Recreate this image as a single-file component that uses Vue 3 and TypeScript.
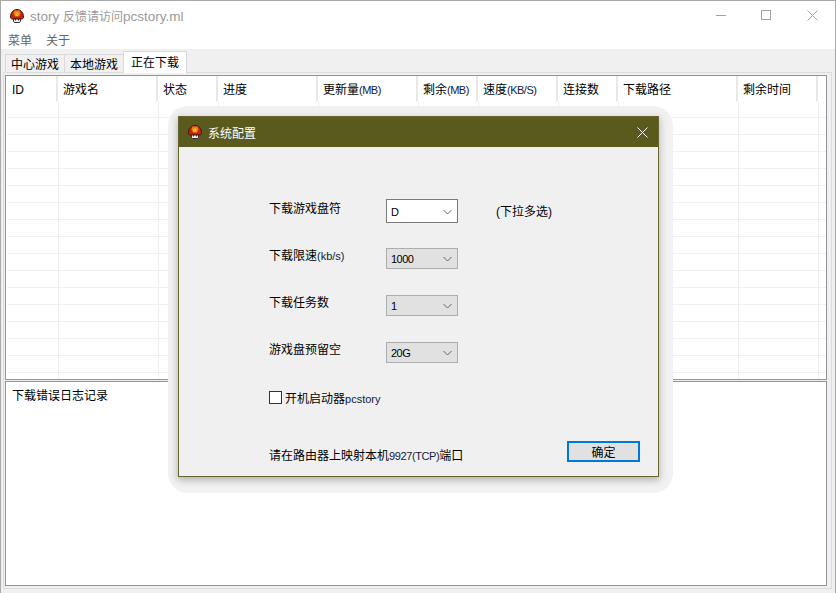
<script setup lang="ts">
const columns = [
  { label: 'ID', unit: '', width: 52 },
  { label: '游戏名', unit: '', width: 100 },
  { label: '状态', unit: '', width: 60 },
  { label: '进度', unit: '', width: 100 },
  { label: '更新量', unit: '(MB)', width: 100 },
  { label: '剩余', unit: '(MB)', width: 60 },
  { label: '速度', unit: '(KB/S)', width: 80 },
  { label: '连接数', unit: '', width: 60 },
  { label: '下载路径', unit: '', width: 120 },
  { label: '剩余时间', unit: '', width: 80 },
]
const rows = Array.from({ length: 17 }, (_, i) => i)
const tabs = ['中心游戏', '本地游戏']
</script>

<template>
  <div class="window">
    <svg class="defs" width="0" height="0">
      <symbol id="mushroom" viewBox="0 0 14 14">
        <path d="M.5 8C.5 3.500 3.300.5 7 .5s6.500 3 6.500 7.500c0 1.200-.7 2-2 2h-9c-1.300 0-2-.8-2-2z" fill="#c9230f" stroke="#3a1810" />
        <path d="M4.500 1.500h5l1 3-1.500 3h-4l-1.500-3z" fill="#ea7f16" />
        <path d="M5.800 3.500h2.400l.8 2-1 1.500H6L5 5.500z" fill="#f7b62a" />
        <path d="M3.500 10h7v2c0 1-.8 1.500-1.500 1.500H5c-.8 0-1.500-.5-1.500-1.500z" fill="#f6f3ea" stroke="#3a2a22" />
        <path d="M5.500 10v1.500M8.500 10v1.500" stroke="#3a2a22" />
      </symbol>
    </svg>
    <header class="titlebar">
      <svg class="logo" width="14" height="14"><use href="#mushroom" /></svg>
      <span class="title-text">story <span class="cjk">反馈请访问</span>pcstory.ml</span>
      <div class="controls">
        <svg width="10" height="11" viewBox="0 0 10 11"><path d="M0 5.500h10" stroke="#a3a3a3" /></svg>
        <svg width="11" height="11" viewBox="0 0 11 11"><rect x=".5" y=".5" width="9" height="9" fill="none" stroke="#a3a3a3" /></svg>
        <svg width="11" height="11" viewBox="0 0 11 11"><path d="M.5.500l10 10M10.500.500l-10 10" stroke="#a3a3a3" /></svg>
      </div>
    </header>
    <nav class="menubar">
      <span>菜单</span>
      <span>关于</span>
    </nav>
    <main class="content">
      <div class="tabs">
        <span v-for="tab in tabs" :key="tab" class="tab">{{ tab }}</span>
        <span class="tab active">正在下载</span>
      </div>
      <div class="tabpage">
        <section class="table-panel">
          <div class="thead">
            <div v-for="col in columns" :key="col.label" class="th" :style="{ width: col.width + 'px' }">{{ col.label }}<span class="unit">{{ col.unit }}</span></div>
          </div>
          <div v-for="row in rows" :key="row" class="tr">
            <div v-for="col in columns" :key="col.label" class="td" :style="{ width: col.width + 'px' }"></div>
          </div>
        </section>
        <section class="log-panel">下载错误日志记录</section>
      </div>
    </main>

    <div class="halo">
      <div class="dialog">
        <div class="dialog-title">
          <svg class="logo" width="14" height="14"><use href="#mushroom" /></svg>
          <span class="dialog-title-text">系统配置</span>
          <svg class="dialog-close" width="11" height="11" viewBox="0 0 11 11"><path d="M.5.500l10 10M10.500.500l-10 10" stroke="#fff" /></svg>
        </div>
        <div class="dialog-body">
          <div class="form">
            <div class="field">
              <label>下载游戏盘符</label>
              <div class="select white"><span>D</span><svg width="9" height="6" viewBox="0 0 9 6"><path d="M.5 1l4 4 4-4" fill="none" stroke="#666" /></svg></div>
              <span class="hint">(下拉多选)</span>
            </div>
            <div class="field">
              <label>下载限速<span class="latin">(kb/s)</span></label>
              <div class="select"><span>1000</span><svg width="9" height="6" viewBox="0 0 9 6"><path d="M.5 1l4 4 4-4" fill="none" stroke="#666" /></svg></div>
            </div>
            <div class="field">
              <label>下载任务数</label>
              <div class="select"><span>1</span><svg width="9" height="6" viewBox="0 0 9 6"><path d="M.5 1l4 4 4-4" fill="none" stroke="#666" /></svg></div>
            </div>
            <div class="field">
              <label>游戏盘预留空</label>
              <div class="select"><span>20G</span><svg width="9" height="6" viewBox="0 0 9 6"><path d="M.5 1l4 4 4-4" fill="none" stroke="#666" /></svg></div>
            </div>
            <div class="check-row">
              <span class="checkbox"></span>
              <span>开机启动器<span class="latin">pcstory</span></span>
            </div>
          </div>
          <div class="dialog-foot">
            <span class="foot-text">请在路由器上映射本机<span class="latin narrow">9927(TCP)</span>端口</span>
            <button class="ok" type="button">确定</button>
          </div>
        </div>
      </div>
    </div>
  </div>
</template>

<style>
html, body { margin: 0; padding: 0; background: #f0f0f0; overflow: hidden; }
</style>

<style scoped>
.window {
  position: relative;
  box-sizing: border-box;
  width: 836px;
  height: 593px;
  background: #f0f0f0;
  border-top: 1px solid #a9a9a9;
  border-left: 1px solid #a9a9a9;
  border-right: 1px solid #a9a9a9;
  font-family: "Liberation Sans", "Noto Sans CJK SC", sans-serif;
  font-size: 12px;
  color: #000;
  overflow: hidden;
}
.defs { position: absolute; }
.titlebar {
  display: flex;
  align-items: center;
  height: 29px;
  background: #fff;
  padding-left: 9px;
}
.logo { flex: none; }
.title-text {
  margin-left: 6px;
  font-size: 13.5px;
  color: #9a9a9a;
}
.cjk { font-size: 12px; }
.controls {
  margin-left: auto;
  display: flex;
  gap: 35px;
  padding-right: 17px;
}
.menubar {
  display: flex;
  gap: 14px;
  height: 19px;
  align-items: flex-start;
  line-height: 22px;
  padding-left: 7px;
  background: #fff;
  color: #666;
}
.content { padding-left: 2px; }
.tabs {
  position: relative;
  display: flex;
  height: 23px;
  align-items: flex-end;
  padding-left: 2px;
}
.tab {
  box-sizing: border-box;
  height: 18px;
  width: 60px;
  line-height: 20px;
  text-align: center;
  background: #f0f0f0;
  border: 1px solid #d9d9d9;
  border-bottom: 0;
  margin-right: -1px;
}
.tab.active {
  position: relative;
  z-index: 1;
  height: 22px;
  width: 64px;
  background: #fff;
  line-height: 22px;
  margin-bottom: -1px;
}
.tabpage {
  box-sizing: border-box;
  width: 829px;
  height: 517px;
  padding: 2px 0 0 1px;
  border: 1px solid #dcdcdc;
}
.table-panel {
  box-sizing: border-box;
  width: 822px;
  height: 305px;
  background: #fff;
  border: 1px solid #8f949c;
  overflow: hidden;
}
.thead { display: flex; height: 25px; }
.th {
  box-sizing: border-box;
  flex: none;
  height: 25px;
  padding: 5px 0 0 5px;
  line-height: 18px;
  white-space: nowrap;
  border-right: 2px solid #e8e8e8;
}
.th:first-child { padding-left: 6px; }
.unit { font-size: 11px; letter-spacing: -0.5px; color: #102040; }
.tr { display: flex; height: 17px; margin-left: 1px; }
.tr::after {
  content: "";
  flex: 1;
  height: 17px;
  box-sizing: border-box;
  border-bottom: 1px solid #f0f0f0;
}
.td {
  box-sizing: border-box;
  flex: none;
  height: 17px;
  border-right: 1px solid #f0f0f0;
  border-bottom: 1px solid #f0f0f0;
}
.log-panel {
  box-sizing: border-box;
  width: 822px;
  height: 205px;
  margin-top: 1px;
  padding: 5px 0 0 6px;
  line-height: 18px;
  background: #fff;
  border: 1px solid #8f949c;
}
.halo {
  position: absolute;
  left: 167px;
  top: 105px;
  box-sizing: border-box;
  width: 505px;
  height: 387px;
  padding: 10px;
  border-radius: 20px;
  background: #f2f2f2;
}
.dialog {
  box-sizing: border-box;
  width: 481px;
  height: 361px;
  border: 1px solid #66662e;
  background: #f0f0f0;
  box-shadow: 0 3px 7px rgba(0, 0, 0, 0.25), 0 0 7px 4px #ebebeb;
  display: flex;
  flex-direction: column;
}
.dialog-title {
  display: flex;
  align-items: center;
  height: 30px;
  flex: none;
  padding-left: 9px;
  background: #5a5a1e;
  color: #fff;
}
.dialog-title-text { margin-left: 6px; }
.dialog-close { margin-left: auto; margin-right: 10px; }
.dialog-body {
  flex: 1;
  display: flex;
  flex-direction: column;
  padding: 52px 18px 0 90px;
}
.form { flex: 1; display: flex; flex-direction: column; }
.field {
  display: flex;
  align-items: flex-start;
  height: 47px;
}
.field label {
  width: 117px;
  line-height: 18px;
  margin-top: 1px;
}
.latin { font-size: 11px; color: #102040; }
.narrow { letter-spacing: -0.4px; }
.select {
  box-sizing: border-box;
  width: 72px;
  height: 21px;
  margin-top: 2px;
  display: flex;
  align-items: center;
  justify-content: space-between;
  padding: 1px 5px 0 4px;
  background: #e1e1e1;
  border: 1px solid #adadad;
  font-size: 11px;
  letter-spacing: -0.5px;
}
.select.white {
  height: 24px;
  margin-top: 0;
  background: #fff;
  border-color: #7a7a7a;
}
.hint { margin-left: 38px; margin-top: 4px; line-height: 18px; }
.check-row {
  display: flex;
  align-items: center;
  gap: 3px;
  margin-top: 1px;
  height: 18px;
}
.checkbox {
  box-sizing: border-box;
  width: 13px;
  height: 13px;
  background: #fff;
  border: 1px solid #333;
}
.dialog-foot {
  display: flex;
  align-items: flex-end;
  justify-content: space-between;
  padding-bottom: 14px;
}
.foot-text { line-height: 18px; margin-bottom: -3px; }
.ok {
  box-sizing: border-box;
  width: 73px;
  height: 21px;
  padding: 0;
  background: #e1e1e1;
  border: 2px solid #0078d7;
  font: inherit;
  color: #000;
}
</style>
